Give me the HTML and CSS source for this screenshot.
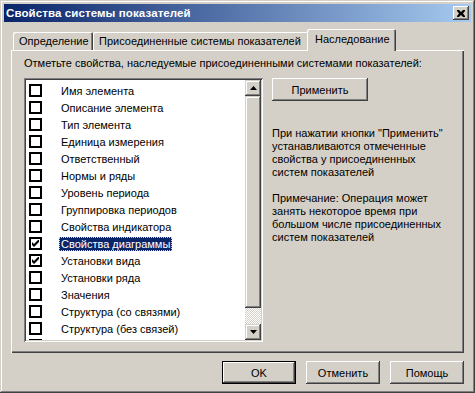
FILE: index.html
```html
<!DOCTYPE html>
<html>
<head>
  <title>Свойства системы показателей</title>
  <meta charset="utf-8">
  <link rel="stylesheet" href="styles.css">
</head>
<body>
  <div class="window">
    <!-- Title bar -->
    <div class="titlebar">
      <span class="title">Свойства системы показателей</span>
      <div class="close">
        <svg width="8" height="7" viewBox="0 0 8 7">
          <path d="M0 0h2l2 2 2-2h2v1L6 3.5 8 6v1H6L4 5 2 7H0V6l2-2.5L0 1z" fill="#000"/>
        </svg>
      </div>
    </div>

    <div class="content">
      <!-- Tabs -->
      <div class="tabs">
        <div class="tab tab-def">Определение</div>
        <div class="tab tab-sys">Присоединенные системы показателей</div>
        <div class="tab tab-inh selected">Наследование</div>
      </div>

      <!-- Tab panel -->
      <div class="panel">
        <div class="hint">Отметьте свойства, наследуемые присоединенными системами показателей:</div>
        <div class="panel-row">
          <div class="listbox">
            <div class="items">
              <div class="item"><span class="check"></span><span class="label">Имя элемента</span></div>
              <div class="item"><span class="check"></span><span class="label">Описание элемента</span></div>
              <div class="item"><span class="check"></span><span class="label">Тип элемента</span></div>
              <div class="item"><span class="check"></span><span class="label">Единица измерения</span></div>
              <div class="item"><span class="check"></span><span class="label">Ответственный</span></div>
              <div class="item"><span class="check"></span><span class="label">Нормы и ряды</span></div>
              <div class="item"><span class="check"></span><span class="label">Уровень периода</span></div>
              <div class="item"><span class="check"></span><span class="label">Группировка периодов</span></div>
              <div class="item"><span class="check"></span><span class="label">Свойства индикатора</span></div>
              <div class="item">
                <span class="check">
                  <svg width="7" height="7" viewBox="0 0 7 7"><path d="M0 2v3l2 2 5-5V-1L2 4z" fill="#000"/></svg>
                </span>
                <span class="label active">Свойства диаграммы</span>
              </div>
              <div class="item">
                <span class="check">
                  <svg width="7" height="7" viewBox="0 0 7 7"><path d="M0 2v3l2 2 5-5V-1L2 4z" fill="#000"/></svg>
                </span>
                <span class="label">Установки вида</span>
              </div>
              <div class="item"><span class="check"></span><span class="label">Установки ряда</span></div>
              <div class="item"><span class="check"></span><span class="label">Значения</span></div>
              <div class="item"><span class="check"></span><span class="label">Структура (со связями)</span></div>
              <div class="item"><span class="check"></span><span class="label">Структура (без связей)</span></div>
              <div class="item"><span class="check"></span></div>
            </div>
            <div class="scrollbar">
              <div class="sb-btn">
                <svg width="7" height="4" viewBox="0 0 7 4"><path d="M3.5 0L7 4H0z" fill="#000"/></svg>
              </div>
              <div class="sb-thumb"></div>
              <div class="sb-track"></div>
              <div class="sb-btn">
                <svg width="7" height="4" viewBox="0 0 7 4"><path d="M0 0h7L3.5 4z" fill="#000"/></svg>
              </div>
            </div>
          </div>

          <div class="side">
            <div class="btn apply">Применить</div>
            <p class="note">При нажатии кнопки "Применить" устанавливаются отмеченные свойства у присоединенных систем показателей</p>
            <p class="note">Примечание: Операция может занять некоторое время при большом числе присоединенных систем показателей</p>
          </div>
        </div>
      </div>

      <!-- Dialog buttons -->
      <div class="buttons">
        <div class="btn default">OK</div>
        <div class="btn">Отменить</div>
        <div class="btn">Помощь</div>
      </div>
    </div>
  </div>
</body>
</html>
```

FILE: styles.css
```css
/* Base */
body, html {
  margin: 0;
  padding: 0;
  background: #d4d0c8;
}

body {
  width: 475px;
  height: 393px;
  overflow: hidden;
  font-family: "Liberation Sans", Arial, sans-serif;
  font-size: 11px;
  color: #000;
}

/* Window frame */
.window {
  width: 475px;
  height: 393px;
  box-sizing: border-box;
  padding: 4px;
  background: #d4d0c8;
  box-shadow:
    inset -1px -1px #404040,
    inset 1px 1px #d4d0c8,
    inset -2px -2px #808080,
    inset 2px 2px #fff;
  display: flex;
  flex-direction: column;
}

.titlebar {
  height: 18px;
  display: flex;
  align-items: center;
  justify-content: space-between;
  padding: 0 2px 0 2px;
  background: linear-gradient(to right, #0a246a, #a6caf0);
}

.title {
  color: #fff;
  font-weight: bold;
  font-size: 11.5px;
  letter-spacing: 0.1px;
}

.close {
  width: 16px;
  height: 14px;
  box-sizing: border-box;
  background: #d4d0c8;
  display: flex;
  align-items: center;
  justify-content: center;
  box-shadow:
    inset -1px -1px #404040,
    inset 1px 1px #fff,
    inset -2px -2px #808080;
}

.content {
  flex: 1;
  padding: 7px 7px 0 7px;
  display: flex;
  flex-direction: column;
}

/* Tabs */
.tabs {
  height: 21px;
  display: flex;
  align-items: flex-end;
  padding-left: 2px;
}

.tab {
  height: 18px;
  box-sizing: border-box;
  display: flex;
  align-items: center;
  padding-left: 6px;
  border-radius: 2px 2px 0 0;
  box-shadow:
    inset 1px 1px #fff,
    inset -1px 0 #404040,
    inset -2px 0 #808080;
}

.tab-def { width: 80px; }
.tab-sys { width: 216px; }

.tab.selected {
  width: 89px;
  height: 22px;
  margin-left: -2px;
  margin-bottom: -1px;
  padding-left: 8px;
  padding-bottom: 2px;
  background: #d4d0c8;
  position: relative;
  z-index: 1;
}

/* Panel */
.panel {
  height: 303px;
  box-sizing: border-box;
  padding: 7px 0 0 13px;
  box-shadow:
    inset 1px 1px #fff,
    inset -1px -1px #404040,
    inset -2px -2px #808080;
}

.hint {
  line-height: 13px;
  height: 13px;
}

.panel-row {
  display: flex;
  margin-top: 8px;
}

/* List box */
.listbox {
  width: 239px;
  height: 264px;
  box-sizing: border-box;
  padding: 2px;
  background: #fff;
  display: flex;
  overflow: hidden;
  box-shadow:
    inset 1px 1px #808080,
    inset -1px -1px #fff,
    inset 2px 2px #404040,
    inset -2px -2px #d4d0c8;
}

.items {
  flex: 1;
  padding-top: 2px;
  overflow: hidden;
}

.item {
  height: 17px;
  display: flex;
  align-items: center;
}

.check {
  width: 13px;
  height: 13px;
  box-sizing: border-box;
  border: 2px solid #000;
  margin-left: 3px;
  display: flex;
  align-items: center;
  justify-content: center;
  background: #fff;
}

.label {
  margin-left: 17px;
  padding: 0 2px;
  height: 14px;
  line-height: 14px;
}

.label.active {
  background: #0a246a;
  color: #fff;
  outline: 1px dotted #d4d0c8;
  outline-offset: -1px;
}

/* Scrollbar */
.scrollbar {
  width: 16px;
  display: flex;
  flex-direction: column;
}

.sb-btn, .sb-thumb {
  background: #d4d0c8;
  box-shadow:
    inset -1px -1px #404040,
    inset 1px 1px #d4d0c8,
    inset -2px -2px #808080,
    inset 2px 2px #fff;
}

.sb-btn {
  height: 16px;
  display: flex;
  align-items: center;
  justify-content: center;
}

.sb-thumb {
  height: 212px;
}

.sb-track {
  flex: 1;
  background: repeating-conic-gradient(#fff 0 25%, #d4d0c8 0 50%) 0 0 / 2px 2px;
}

/* Right column */
.side {
  margin-left: 9px;
  width: 175px;
}

.btn {
  width: 74px;
  height: 23px;
  box-sizing: border-box;
  display: flex;
  align-items: center;
  justify-content: center;
  background: #d4d0c8;
  box-shadow:
    inset -1px -1px #404040,
    inset 1px 1px #fff,
    inset -2px -2px #808080,
    inset 2px 2px #d4d0c8;
}

.apply {
  width: 96px;
  margin-bottom: 26px;
}

.note {
  margin: 0 0 13px;
  line-height: 13px;
}

/* Bottom buttons */
.buttons {
  display: flex;
  justify-content: flex-end;
  gap: 10px;
  margin-top: 8px;
}

.btn.default {
  box-shadow:
    inset 0 0 0 1px #000,
    inset -2px -2px #404040,
    inset 2px 2px #fff,
    inset -3px -3px #808080;
}
```
